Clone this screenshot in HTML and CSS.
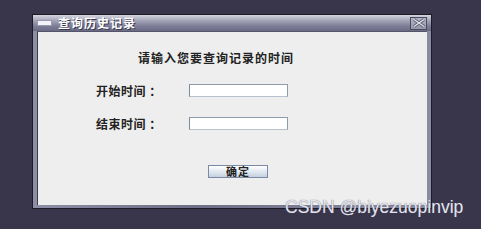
FILE: index.html
```html
<!DOCTYPE html>
<html lang="zh">
<head>
  <meta charset="UTF-8">
  <title>查询历史记录</title>
  <link rel="stylesheet" href="styles.css">
</head>
<body>
  <div class="window">
    <div class="title-bar">
      <span class="title-icon"></span>
      <span class="title-text">查询历史记录</span>
      <span class="close-btn">
        <svg width="14" height="10" viewBox="0 0 14 10">
          <path d="M2 1.5 L12 8.5 M12 1.5 L2 8.5" stroke="#5c5c72" stroke-width="3" />
          <path d="M2 1.5 L12 8.5 M12 1.5 L2 8.5" stroke="#e6e6ee" stroke-width="1.2" />
        </svg>
      </span>
    </div>
    <div class="frame">
      <div class="content">
        <p class="prompt">请输入您要查询记录的时间</p>
        <div class="form-row">
          <label for="startTime">开始时间 ：</label>
          <input type="text" id="startTime" class="field">
        </div>
        <div class="form-row second">
          <label for="endTime">结束时间 ：</label>
          <input type="text" id="endTime" class="field">
        </div>
        <div class="actions">
          <button type="button" class="ok-btn">确定</button>
        </div>
      </div>
    </div>
  </div>
  <div class="watermark">CSDN @biyezuopinvip</div>
</body>
</html>
```

FILE: styles.css
```css
body {
  margin: 0;
  background-color: #39364c;
  font-family: "Noto Sans CJK SC", sans-serif;
  width: 481px;
  height: 229px;
  position: relative;
  overflow: hidden;
}
.window {
  margin: 14px 0 0 32px;
  width: 398px;
  border: 1px solid #1c1b26;
  background: linear-gradient(to right, #8e8ea6, #6e6e88 40%, #8a8aa2);
}
.title-bar {
  height: 16px;
  display: flex;
  align-items: center;
  background: linear-gradient(to bottom, #d4d4e0 0%, #a4a4b8 35%, #7c7c96 70%, #6a6a84 100%);
}
.title-icon {
  width: 13px;
  height: 4px;
  margin-left: 4px;
  background-color: #f4f4f8;
  border: 1px solid #9a9aae;
}
.title-text {
  margin-left: 6px;
  color: #ffffff;
  font-size: 12px;
  font-weight: bold;
  line-height: 16px;
  text-shadow: 1px 1px 0 #3a3a50;
  letter-spacing: 1px;
}
.close-btn {
  margin-left: auto;
  margin-right: 4px;
  width: 15px;
  height: 11px;
  border: 1px solid #4a4a5e;
  background: linear-gradient(to bottom, #b4b4c6, #9696ac);
  display: flex;
  align-items: center;
  justify-content: center;
}
.frame {
  padding: 0 4px 3px 4px;
}
.content {
  height: 174px;
  background-color: #eeeeee;
  border-left: 1px solid #3c3c4c;
  border-top: 1px solid #55556a;
  box-sizing: border-box;
  color: #222222;
  font-size: 12px;
  font-weight: bold;
}
.prompt {
  margin: 0;
  padding: 19px 0 0 100px;
  line-height: 14px;
  letter-spacing: 1px;
}
.form-row {
  display: flex;
  align-items: center;
  margin-top: 18px;
  padding-left: 58px;
  height: 14px;
}
.form-row.second {
  margin-top: 19px;
}
.form-row label {
  width: 93px;
  letter-spacing: 0.5px;
  white-space: pre;
}
.field {
  width: 99px;
  height: 13px;
  box-sizing: border-box;
  margin: 0;
  padding: 0;
  border: 1px solid #8e9bab;
  border-left-color: #7d8a9c;
  border-bottom-color: #b8c2ce;
  background-color: #ffffff;
}
.actions {
  margin-top: 32px;
  padding-left: 170px;
}
.ok-btn {
  width: 60px;
  height: 13px;
  box-sizing: border-box;
  padding: 0;
  border: 1px solid #7a8aa4;
  background: linear-gradient(to bottom, #ffffff, #dce4ee 60%, #c4d0de);
  font-family: "Noto Sans CJK SC", sans-serif;
  font-size: 11px;
  font-weight: bold;
  line-height: 11px;
  color: #222222;
  letter-spacing: 1px;
}
.watermark {
  position: absolute;
  left: 285px;
  top: 197px;
  font-family: "Liberation Sans", Arial, sans-serif;
  font-size: 17.5px;
  color: #e4e4ec;
  text-shadow: 0 0 1px #55546a;
}
```
